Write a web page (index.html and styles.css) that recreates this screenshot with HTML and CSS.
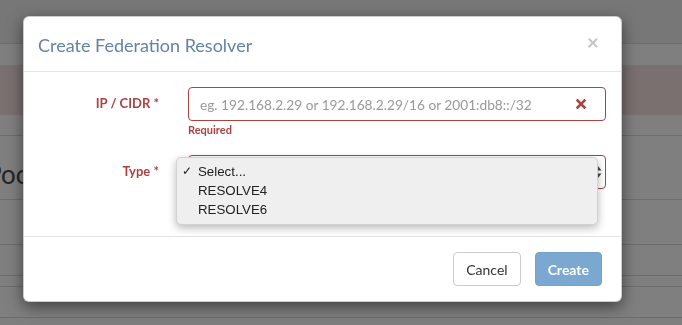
FILE: index.html
```html
<!DOCTYPE html>
<html lang="en">
<head>
    <meta charset="UTF-8">
    <meta name="viewport" content="width=device-width, initial-scale=1.0">
    <title>Federation Resolvers</title>
    <link rel="stylesheet" href="styles.css">
</head>
<body>
    <div class="page">
        <div class="navbar"></div>
        <div class="alert"></div>
        <div class="toolbar"></div>
        <h2 class="page-title">Pools</h2>
        <div class="table-row tall"></div>
        <div class="table-row"></div>
        <div class="table-row short"></div>
        <div class="table-row"></div>
    </div>

    <div class="backdrop"></div>

    <div class="modal">
        <div class="modal-header">
            <h4 class="modal-title">Create Federation Resolver</h4>
            <span class="close">&times;</span>
        </div>

        <div class="modal-body">
            <div class="form-group">
                <label class="control-label">IP / CIDR *</label>
                <div class="field">
                    <div class="input-wrap">
                        <input class="form-control" type="text" placeholder="eg. 192.168.2.29 or 192.168.2.29/16 or 2001:db8::/32">
                        <svg class="feedback-icon" width="10" height="10" viewBox="0 0 10 10">
                            <path d="M1.5 1.5 L8.5 8.5 M8.5 1.5 L1.5 8.5" stroke="#a94442" stroke-width="2.6" stroke-linecap="square"/>
                        </svg>
                    </div>
                    <div class="help-block">Required</div>
                </div>
            </div>

            <div class="form-group">
                <label class="control-label">Type *</label>
                <div class="field">
                    <div class="select-box">
                        <svg class="select-arrows" width="8" height="14" viewBox="0 0 8 14">
                            <path d="M4 1 L7.5 5.5 H0.5 Z M4 13 L7.5 8.5 H0.5 Z" fill="#444"/>
                        </svg>
                        <ul class="select-menu">
                            <li class="selected"><span class="check">&#10003;</span>Select...</li>
                            <li><span class="check"></span>RESOLVE4</li>
                            <li><span class="check"></span>RESOLVE6</li>
                        </ul>
                    </div>
                </div>
            </div>
        </div>

        <div class="modal-footer">
            <button class="btn btn-default">Cancel</button>
            <button class="btn btn-primary" disabled>Create</button>
        </div>
    </div>
</body>
</html>
```

FILE: styles.css
```css
:root {
    --danger: #a94442;
    --title: #6183a7;
    --line: #dadada;
    --divider: #e5e5e5;
}

* {
    margin: 0;
    padding: 0;
    box-sizing: border-box;
}

html, body {
    width: 682px;
    height: 325px;
    overflow: hidden;
}

body {
    font-family: 'Lato', 'Liberation Sans', sans-serif;
    background: #fff;
    color: #333;
    position: relative;
}

/* page behind the dialog */

.navbar {
    height: 44px;
    background: #eee;
    border-bottom: 1px solid var(--line);
}

.alert {
    height: 50px;
    margin-top: 21px;
    background: #f4e1e1;
}

.toolbar {
    height: 21px;
    border-bottom: 1px solid var(--line);
}

.page-title {
    height: 64px;
    line-height: 76px;
    margin-left: -14px;
    font-size: 26px;
    font-weight: 400;
    color: #4a4a4a;
    border-bottom: 1px solid var(--line);
}

.table-row {
    height: 31px;
    border-bottom: 1px solid var(--line);
}

.table-row.tall {
    height: 45px;
}

.table-row.short {
    height: 11px;
}

.backdrop {
    position: fixed;
    inset: 0;
    background: rgba(0, 0, 0, 0.5);
}

/* dialog */

.modal {
    position: absolute;
    top: 16px;
    left: 23px;
    width: 599px;
    background: #fff;
    border: 1px solid rgba(0, 0, 0, 0.2);
    border-radius: 6px;
    box-shadow: 0 5px 15px rgba(0, 0, 0, 0.5);
}

.modal-header {
    display: flex;
    align-items: center;
    justify-content: space-between;
    height: 55px;
    padding: 0 22px 0 14px;
    border-bottom: 1px solid var(--divider);
}

.modal-title {
    font-size: 18px;
    font-weight: 400;
    color: var(--title);
    margin-top: 1px;
}

.close {
    font-size: 21px;
    font-weight: 700;
    line-height: 1;
    color: #c4c4c4;
    margin-top: -6px;
}

.modal-body {
    padding: 15px 15px 47px;
}

.form-group {
    display: grid;
    grid-template-columns: 120px 1fr;
    column-gap: 29px;
}

.form-group + .form-group {
    margin-top: 18px;
}

.control-label {
    text-align: right;
    font-size: 13px;
    font-weight: 700;
    line-height: 33px;
    color: var(--danger);
}

.input-wrap {
    position: relative;
}

.form-control {
    display: block;
    width: 100%;
    height: 34px;
    padding: 6px 11px;
    font-family: inherit;
    font-size: 13.7px;
    color: #555;
    border: 1px solid var(--danger);
    border-radius: 4px;
    outline: none;
}

.form-control::placeholder {
    color: #999;
}

.feedback-icon {
    position: absolute;
    right: 20px;
    top: 12px;
}

.help-block {
    margin-top: 2px;
    font-size: 11px;
    font-weight: 700;
    line-height: 14px;
    color: var(--danger);
}

.select-box {
    position: relative;
    height: 34px;
    border: 1px solid var(--danger);
    border-radius: 4px;
}

.select-arrows {
    position: absolute;
    right: 3px;
    top: 9px;
}

.select-menu {
    position: absolute;
    top: 1px;
    left: -13px;
    width: 422px;
    list-style: none;
    padding: 4px 0 5px;
    background: #efefef;
    border: 1px solid #d2d2d2;
    border-radius: 5px;
    box-shadow: 0 3px 9px rgba(0, 0, 0, 0.28);
    font-family: 'Liberation Sans', 'Helvetica', sans-serif;
    font-size: 13.3px;
    color: #222;
}

.select-menu li {
    display: flex;
    height: 19px;
    line-height: 19px;
    padding-left: 5px;
}

.check {
    width: 16px;
    font-size: 12px;
}

/* footer */

.modal-footer {
    display: flex;
    justify-content: flex-end;
    gap: 14px;
    padding: 15px 19px 15px;
    border-top: 1px solid var(--divider);
}

.btn {
    height: 34px;
    padding: 6px 12px;
    font-family: inherit;
    font-size: 14px;
    border-radius: 4px;
    border: 1px solid #ccc;
    background: #fff;
    color: #333;
}

.btn-primary {
    background: #7aa8d0;
    border-color: #76a2c8;
    color: #fff;
    font-weight: 700;
}
```
